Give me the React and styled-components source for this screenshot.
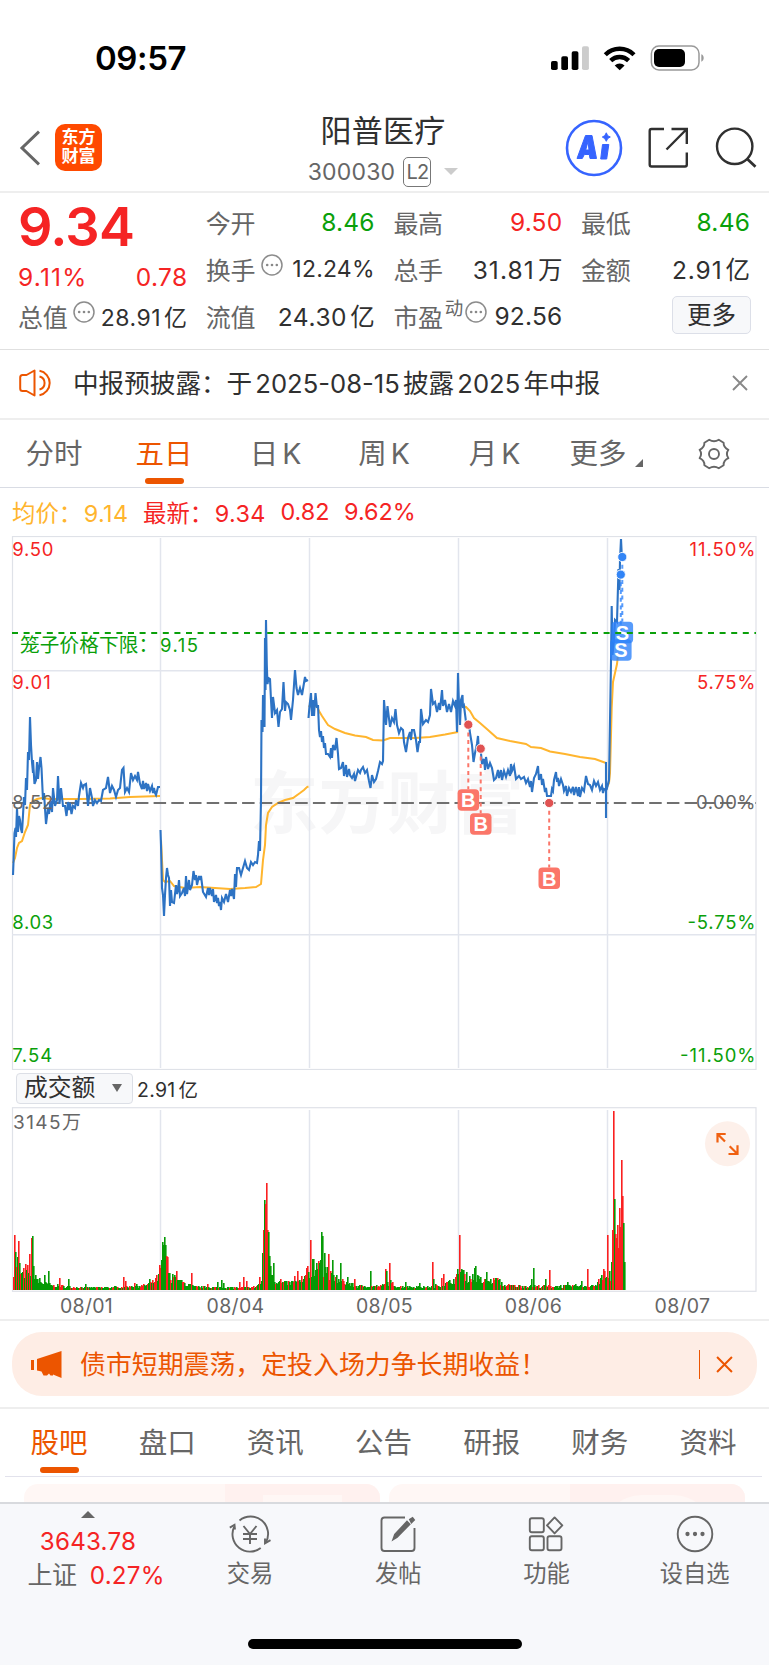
import React from "react";
import styled, { createGlobalStyle } from "styled-components";

const RED = "#f52424";
const GREEN = "#0aa00a";
const ORANGE = "#ec5500";
const DARK = "#303030";
const GREY = "#666";

const GlobalStyle = createGlobalStyle`
  * {
    box-sizing: border-box;
  }
  body {
    margin: 0;
    background: #fff;
    color: ${DARK};
    font-family: Inter, "Noto Sans CJK SC", sans-serif;
  }
  svg {
    display: block;
    flex: none;
  }
`;

const Page = styled.div`
  width: 769px;
  height: 1665px;
  display: flex;
  flex-direction: column;
  overflow: hidden;
  background: #fff;
`;

const StatusBar = styled.div`
  height: 100px;
  padding: 15px 64px 0 95px;
  display: flex;
  align-items: center;
  justify-content: space-between;
`;

const Time = styled.span`
  font-size: 33px;
  font-weight: 580;
  letter-spacing: -0.4px;
  color: #000;
`;

const Header = styled.header`
  height: 93px;
  padding: 4px 12px 0 18px;
  display: flex;
  align-items: center;
  border-bottom: 2px solid #eee;
`;

const HeaderSide = styled.div`
  width: ${p => (p.right ? 244 : 235)}px;
  display: flex;
  align-items: center;
  justify-content: ${p => (p.right ? "flex-end" : "flex-start")};
`;

const AppLogo = styled.div`
  width: 47px;
  height: 47px;
  margin: -1px 0 0 15px;
  padding-top: 4px;
  border-radius: 10px;
  background: #ff4a00;
  color: #fff;
  font-size: 17px;
  font-weight: 700;
  line-height: 19px;
  text-align: center;
`;

const TitleBlock = styled.div`
  flex: 1;
  display: flex;
  flex-direction: column;
  align-items: center;
  padding-top: 2px;
`;

const Title = styled.div`
  font-size: 31px;
  line-height: 40px;
  height: 46px;
  letter-spacing: 0.3px;
`;

const CodeRow = styled.div`
  display: flex;
  align-items: center;
  gap: 8px;
  height: 30px;
  font-size: 23px;
  letter-spacing: 0.2px;
  color: ${GREY};
`;

const LevelBadge = styled.span`
  width: 28px;
  height: 30px;
  margin-right: 5px;
  border: 1px solid #777;
  border-radius: 5px;
  font-size: 20px;
  line-height: 29px;
  letter-spacing: -0.8px;
  text-align: center;
`;

const Caret = styled.span`
  width: 0;
  height: 0;
  border-left: ${p => p.size}px solid transparent;
  border-right: ${p => p.size}px solid transparent;
  border-${p => (p.up ? "bottom" : "top")}: ${p => p.tall || p.size}px solid ${p => p.color};
`;

const Quote = styled.section`
  height: 157px;
  padding: 0 18px;
  display: grid;
  grid-template-columns: repeat(4, 168px);
  column-gap: 19.7px;
  border-bottom: 1.5px solid #e0e0e0;
`;

const QuoteCol = styled.div`
  display: flex;
  flex-direction: column;
  padding-top: 5px;
`;

const QuoteRow = styled.div`
  height: 47px;
  display: flex;
  align-items: center;
  font-size: ${p => p.size || 24.5}px;
  white-space: nowrap;
`;

const Price = styled.div`
  height: 49px;
  padding-top: 2px;
  font-size: 54px;
  font-weight: 600;
  line-height: 54px;
  letter-spacing: -0.8px;
  color: ${RED};
`;

const ChangeRow = styled(QuoteRow)`
  height: 45px;
  margin-right: -1.5px;
  padding-top: 14px;
  letter-spacing: 0.4px;
  color: ${RED};
  justify-content: space-between;
`;

const Percent = styled.span`
  letter-spacing: 1.2px;
`;

const Label = styled.span`
  font-size: 25px;
  letter-spacing: -0.3px;
  color: ${GREY};
`;

const Value = styled.span`
  margin: 0 -1px 0 auto;
  letter-spacing: ${p => p.spacing || 0.2}px;
  color: ${p => p.color || DARK};
`;

const Unit = styled.span`
  margin-left: 3px;
  letter-spacing: 0;
`;

const Sup = styled.span`
  margin: -18px 1px 0 2px;
  font-size: 18.5px;
  color: ${GREY};
`;

const InfoIcon = styled.svg`
  margin: -8px 0 0 ${p => p.$gap || 0}px;
`;

const MoreButton = styled.button`
  width: 79px;
  height: 38px;
  margin: -1px -2px 0 auto;
  padding: 0;
  border: 1.5px solid #dcdfe8;
  border-radius: 5px;
  background: #f7f8fa;
  color: ${DARK};
  font: inherit;
  line-height: 33px;
`;

const Notice = styled.section`
  height: 70px;
  padding: 0 21px 2px 19px;
  display: flex;
  align-items: center;
  font-size: 25.6px;
  border-bottom: 2px solid #eee;
`;

const NoticeText = styled.span`
  flex: 1;
  margin: -4px 0 0 20px;
  word-spacing: -4px;
  white-space: pre;
`;

const Tabs = styled.nav`
  height: 68px;
  display: flex;
  padding-top: ${p => p.top || 0}px;
  margin: ${p => p.gutter || 0};
  border-bottom: 1.5px solid ${p => p.line};
  align-items: flex-start;
`;

const Tab = styled.span`
  width: ${p => p.w}px;
  height: 63px;
  padding-top: 12px;
  display: flex;
  flex-direction: column;
  align-items: center;
  font-size: 28.5px;
  line-height: 42px;
  white-space: nowrap;
  color: ${p => (p.active ? ORANGE : GREY)};
  &::after {
    content: "";
    width: 39px;
    height: 6px;
    margin-top: 3px;
    border-radius: 3px;
    background: ${p => (p.active ? ORANGE : "transparent")};
  }
`;

const TabLabel = styled.span`
  height: 42px;
  display: flex;
  align-items: center;
  gap: ${p => p.gap || 0}px;
`;

const Corner = styled.i`
  width: 0;
  height: 0;
  margin-top: 18px;
  border-left: 8px solid transparent;
  border-bottom: 8px solid ${GREY};
`;

const Legend = styled.div`
  height: 48px;
  padding: 0 12px 1px;
  display: flex;
  align-items: center;
  gap: 14.5px;
  font-size: 23.4px;
  white-space: nowrap;
`;

const LegendItem = styled.span`
  color: ${p => p.color || RED};
  b {
    margin-left: 1.5px;
    font-weight: 400;
    letter-spacing: 0.4px;
  }
`;

const VolumeHead = styled.div`
  height: 37px;
  padding: 0 16px 1px;
  display: flex;
  align-items: center;
  gap: 4px;
  font-size: 19.5px;
  letter-spacing: 0.3px;
`;

const Selector = styled.div`
  width: 117px;
  height: 31px;
  padding: 0 10px 0 7px;
  display: flex;
  align-items: center;
  justify-content: space-between;
  border: 1.5px solid #dcdfe6;
  border-radius: 4px;
  background: #f7f8fa;
  font-size: 23.8px;
  line-height: 28px;
  letter-spacing: 0;
`;

const Dates = styled.div`
  height: 29px;
  padding: 0 12px;
  display: flex;
  border-bottom: 2px solid #eee;
  font-size: 19.5px;
  line-height: 29px;
  letter-spacing: 0.3px;
  color: ${GREY};
  span {
    flex: 1;
    text-align: center;
  }
`;

const BannerWrap = styled.section`
  height: 88px;
  padding: 11px 12px 0;
  border-bottom: 2px solid #eee;
`;

const Banner = styled.div`
  height: 64px;
  padding: 0 24px 0 19px;
  display: flex;
  align-items: center;
  border-radius: 30px;
  background: #feede5;
  color: ${ORANGE};
  font-size: 25.9px;
`;

const BannerText = styled.span`
  flex: 1;
  margin: -4px 0 0 18px;
  white-space: nowrap;
`;

const Divider = styled.i`
  width: 1.5px;
  height: 29px;
  margin-right: 16px;
  background: ${ORANGE};
`;

const Cards = styled.div`
  height: 25px;
  padding: 7px 24px 0;
  display: flex;
  gap: 9px;
  overflow: hidden;
`;

const Card = styled.div`
  flex: 1;
  height: 40px;
  display: flex;
  justify-content: flex-end;
  border-radius: 14px;
  overflow: hidden;
  background: #fff7f5;
`;

const CardArt = styled.div`
  width: ${p => p.w}px;
  padding: 11px ${p => p.side}px 0;
  background: #fff1ef;
  &::before {
    content: "";
    display: block;
    height: 40px;
    border-radius: ${p => p.r};
    background: #fff7f5;
  }
`;

const Footer = styled.footer`
  height: 163px;
  padding-top: 7px;
  display: flex;
  flex-direction: column;
  align-items: center;
  border-top: 2px solid #d8dade;
  background: #f7f8fb;
`;

const FooterRow = styled.div`
  width: 100%;
  height: 128px;
  display: flex;
`;

const IndexCell = styled.div`
  width: 176px;
  display: flex;
  flex-direction: column;
  align-items: center;
  font-size: 24.2px;
  line-height: 33px;
  color: ${RED};
  letter-spacing: 0.2px;
`;

const IndexValue = styled.div`
  margin-top: 7px;
`;

const IndexRow = styled.div`
  display: flex;
  gap: 13px;
  margin-top: 1px;
  padding-left: 16px;
`;

const Action = styled.div`
  width: 148.2px;
  padding-top: 4px;
  display: flex;
  flex-direction: column;
  align-items: center;
  gap: 3px;
  font-size: 23.3px;
  line-height: 36px;
  color: ${GREY};
`;

const HomeBar = styled.div`
  width: 274px;
  height: 10px;
  border-radius: 5px;
  background: #000;
`;

const PRICE = [
  "13,875 13.5,862 14.5,833 15.5,828 16,837 17,808 18,832 19,816 20,820 21,829 22,833 23,815 24,797 25,805 26,778 27,790 28,752 29,760 30,717 31,745 32,762 33,773 33,760 34.5,784 36,780 37,762 38,779 39,768 40.5,757 41.5,768 43,800 44,793 46,824 48,808 49,814 50.5,801 52,812 53,788 55,806 57,800 58,776 59.5,804 61,788 63,806 65,806 66.5,816 68,802 69,810 70,803 71.5,814 73,806 75,808 76,800 78,806 79,796 81,783 83,788 84,785 86,784 88,806 90,788 92,798 93,806 95,800 97,803 99,800 101,801 103,790 106,788 108,777 110,793 112,786 114,790 116,797 118,790 120,788 122,770 123.5,768 125,792 127,788 129,792 131,773 133,780 135,776 137,780 138,772 140,784 142,789 143,781 144,789 146,783 147,791 148,784 150,791 152,786 153,793 154,788 155,793 156,795 158,787 160,787",
  "160.5,830 161,845 162,888 163,895 164,916 165,895 166,878 167,868 168,875 169,878 170,906 171,890 172,902 174,903 176,885 177,894 178,890 179,880 180,896 182,893 184,888 185,896 186,876 187,894 189,880 190,890 192,885 193.5,871 195,880 196,875 197,885 199,876 200,880 201,876 203,892 206,897 208,888 209,895 210,888 212,896 213,889 214,902 216,895 217,903 218,898 219,906 220,902 221,910 222,898 224,902 226,894 228,902 230,890 231,896 232,889 234,899 235,874 236,887 237,868 239,868 241,875 243,868 245,861 247,868 249,870 251,862 253,865 255,862 257,863 258,855 259,841 260,851 261,800 261.5,720 262.5,732 263,695 264.5,727 265,638 265.5,690 266,620 266.8,665 267.5,684 268.5,678 270,679 271,700 272,718 273,697 275,713 277,710 278.5,727 280,712 282,709 283.5,682 285,711 286,702 288,704 290,710 291,720 293,700 295,670 296.5,688 298,695 300,688 302,695 304,683 305,677 306,681 308,680",
  "308.5,718 309.5,706 311,693 312,716 313,700 314,716 315.5,693 317,708 318,705 319,730 320,737 321,731 322,742 323,736 324,748 325,743 326,754 328,754 330,757 331,748 332,758 333,745 335,750 336.5,738 338,754 339,769 341,768 343,762 344,776 346,765 347,777 349,769 350,775 352,778 354,774 355,781 358,770 360,773 361,770 363,767 365,773 367,770 369,781 370.5,788 372,775 374,782 376,779 378,771 380,762 382,764 383,761 384,700 386,725 387.5,706 390,727 392,718 394,722 395.5,709 397,725 399,733 401,728 403,730 404,742 406,752 408,738 410,732 411,740 412,730 414,730 416,740 417.5,752 419,742 420,742 421,709 423,724 426,720 428,722 430,715 431,689 433,704 435,702 437,712 439,703 440,710 442,690 443,706 445,700 447,712 449,704 451,712 453,701 455,706 456,700 457,732 458,673",
  "458,673 459,706 460,725 461,700 462.5,695 463,708 464,706 466,722 469,724 470,733 472,745 473.5,762 475,753 477,744 478,736 479,752 480.5,748 482,764 484,759 485,770 486,757 488,769 490,763 492,768 494,780 496,778 498,770 499,778 501,770 502,780 504,771 506,777 508,770 510,776 511,764 512,771 514,766 516,779 519,776 521,779 524,777 526,783 528,779 530,787 531,781 532,792 534,778 536,774 538,766 539,780 541,774 542,785 543,779 545,792 546,788 547,796 551,796 552,789 553,791 554,780 556,772 557,782 558,778 559,786 561,779 563,785 564,791 566,786 567,796 569,788 571,792 573,787 574,795 576,787 578,796 579,787 580,797 582,788 584,791 586,776 588,784 590,785 592,790 594,781 596,786 598,782 600,790 602,786 603,793 604,789 606,790 606,762 606,818",
  "606.5,790 609,780 610,721 611,662 611.7,606 612.5,655 614,640 615,620 617,622 618.5,569 619.5,590 620,560 621,539 622,560"
];

const AVERAGE = [
  "13,863 15,858 17,848 19,843 22,841 25,832 28,825 30,805 33,801 37,799 42,798 50,799 80,799 110,798.5 130,797 160,796",
  "161,840 163,880 165,882 170,881 174,886 185,888 200,887 215,888 230,889 245,888 256,887 261,884 263,860 265,845 266,825 268,813 272,807 278,803 285,800 293,798 300,793 304,790 307,787 308.5,786.5",
  "308.5,706 312,707 317,706 319,711 322,716 328,725 335,729 345,733 355,735.5 366,737 373,740 383,740.5 390,738 400,738 415,738 430,737 445,734.5 458,732",
  "458.5,704 462,706 466,707 470,711 474,718 480,723 488,730 497,738 510,741 526,744 531,747 541,748 550,751.5 565,754 580,757 595,759 606,763",
  "606.5,788 609,783 610,773 611.7,708 613,682 615,673 617,664 618,655"
];

const GRID_X = [160.5, 309.5, 458.5, 607.5];

// [text, baseline, colour, right aligned, width]
const AXIS = [
  ["9.50", 556, RED, false, 41],
  ["9.01", 689, RED, false, 38.5],
  ["8.52", 809, GREY, false, 41],
  ["8.03", 929, GREEN, false, 41],
  ["7.54", 1062, GREEN, false, 40],
  ["11.50%", 556, RED, true, 66],
  ["5.75%", 689, RED, true, 58.5],
  ["0.00%", 809, GREY, true, 59.5],
  ["-5.75%", 929, GREEN, true, 68],
  ["-11.50%", 1062, GREEN, true, 75.5]
];

const MARKS = [
  { x: 468.3, y: 724.7, box: 789.3 },
  { x: 480.7, y: 748.7, box: 813.3 },
  { x: 549.2, y: 803, box: 867.5 }
];

const SELLS = [
  { x: 620.8, y: 574.6, box: 639.3 },
  { x: 622.3, y: 557, box: 621.8 }
];

// typical turnover height along the time axis
const VOLUME_BASE = [
  [13, 24], [17, 30], [21, 16], [27, 20], [33, 22], [37, 9], [50, 5], [70, 3], [95, 2.5],
  [118, 3], [145, 5], [152, 8], [158, 14], [162, 38], [166, 34], [169, 14], [178, 9],
  [195, 3], [230, 2.5], [255, 3], [261, 9], [263, 50], [269, 34], [273, 10], [285, 7],
  [295, 8], [303, 9], [308, 20], [318, 24], [326, 22], [332, 12], [345, 8], [357, 4],
  [380, 4], [390, 8], [396, 4], [425, 3], [445, 6], [455, 12], [461, 21], [467, 13],
  [476, 13], [482, 9], [497, 10], [503, 5], [525, 4], [560, 4], [596, 5], [602, 13],
  [610, 15], [613, 50], [617, 42], [619, 34], [622, 56], [624, 25], [625, 8]
];

const SPIKES = [
  [14, 55, "r"], [15, 38, "g"], [18, 49, "r"], [25, 26, "r"], [29, 36, "r"], [31, 52, "r"],
  [32, 54, "g"], [33, 24, "g"], [39, 12, "g"], [44, 15, "g"], [48, 19, "g"], [59, 12, "r"],
  [68, 11, "g"], [85, 6, "g"], [123, 13, "r"], [125, 9, "r"], [134, 7, "r"], [149, 11, "g"],
  [160, 22, "r"], [162, 48, "g"], [164, 53, "g"], [165, 45, "g"], [166, 34, "r"], [172, 16, "g"],
  [174, 15, "g"], [176, 19, "r"], [180, 10, "g"], [191, 17, "r"], [207, 6, "r"], [217, 8, "g"],
  [221, 10, "g"], [223, 7, "g"], [239, 8, "r"], [243, 13, "r"], [246, 9, "r"], [259, 13, "r"],
  [263, 60, "r"], [264, 90, "g"], [265, 86, "r"], [266, 107, "r"], [267, 60, "r"], [268, 58, "g"],
  [269, 34, "g"], [273, 27, "g"], [280, 11, "r"], [285, 9, "g"], [294, 14, "r"], [297, 19, "r"],
  [301, 14, "r"], [306, 22, "r"], [307, 24, "r"], [310, 50, "r"], [312, 31, "g"], [313, 31, "g"],
  [316, 27, "g"], [319, 27, "g"], [321, 58, "g"], [322, 54, "g"], [324, 37, "g"], [328, 36, "r"],
  [332, 30, "g"], [336, 15, "g"], [340, 27, "g"], [347, 13, "g"], [354, 11, "r"], [370, 19, "g"],
  [385, 21, "r"], [386, 19, "g"], [389, 27, "r"], [405, 8, "g"], [419, 7, "g"], [432, 28, "r"],
  [433, 11, "g"], [441, 12, "r"], [443, 16, "r"], [457, 21, "g"], [459, 55, "r"], [461, 21, "g"],
  [464, 16, "r"], [474, 22, "g"], [475, 24, "g"], [486, 18, "g"], [495, 12, "g"], [497, 12, "r"],
  [531, 11, "g"], [533, 22, "g"], [545, 11, "g"], [549, 20, "r"], [567, 8, "g"], [581, 9, "g"],
  [587, 21, "r"], [598, 11, "r"], [603, 21, "r"], [604, 19, "r"], [607, 55, "r"], [609, 19, "g"],
  [612, 60, "r"], [613, 179, "r"], [614, 91, "g"], [615, 56, "r"], [616, 52, "r"], [617, 65, "r"],
  [618, 42, "r"], [619, 82, "r"], [620, 63, "r"], [621, 130, "r"], [622, 94, "r"], [623, 67, "g"],
  [624, 28, "g"]
];

const baseAt = x => {
  const i = VOLUME_BASE.findIndex(p => p[0] > x);
  if (i < 1) return 8;
  const [x0, h0] = VOLUME_BASE[i - 1];
  const [x1, h1] = VOLUME_BASE[i];
  return h0 + ((h1 - h0) * (x - x0)) / (x1 - x0);
};

const bars = (() => {
  const out = [];
  let seed = 7;
  const next = () => {
    seed = (seed * 16807) % 2147483647;
    return seed / 2147483647;
  };
  for (let x = 13; x < 625; x++) {
    const spike = SPIKES.find(s => s[0] === x);
    const h = Math.max(1, baseAt(x) * (0.55 + next() * 0.75));
    const up = next() > 0.7;
    out.push(
      spike
        ? { x, h: spike[1], up: spike[2] === "r" }
        : { x, h: Math.round(h), up }
    );
  }
  return out;
})();

const Dots = ({ gap }) => (
  <InfoIcon $gap={gap} width="22" height="22" viewBox="0 0 22 22">
    <circle cx="11" cy="11" r="10" fill="none" stroke="#8c8c8c" strokeWidth="1.5" />
    {[6.2, 11, 15.8].map(x => (
      <circle key={x} cx={x} cy="11" r="1.3" fill="#888" />
    ))}
  </InfoIcon>
);

const Close = ({ size, color }) => (
  <svg width={size} height={size} viewBox="0 0 16 16">
    <path d="M1 1L15 15M15 1L1 15" stroke={color} strokeWidth="1.9" fill="none" />
  </svg>
);

const StatusIcons = () => (
  <svg width="155" height="28" viewBox="550 43 155 28">
    <rect x="551" y="60" width="6.7" height="9" rx="1.8" />
    <rect x="561.3" y="55.3" width="6.7" height="13.7" rx="1.8" />
    <rect x="571.7" y="50.3" width="6.7" height="18.7" rx="1.8" />
    <rect x="582" y="45.3" width="6.9" height="23.7" rx="1.8" fill="#ccc" />
    <path
      d="M605.3 53.7A20.4 20.4 0 0 1 634 53.7M610.7 59.6A12.8 12.8 0 0 1 628.6 59.6"
      fill="none"
      stroke="#000"
      strokeWidth="4.4"
    />
    <path d="M614.7 64.4A7.1 7.1 0 0 1 624.6 64.4L619.7 69.2Z" />
    <rect x="651.4" y="45" width="47.6" height="24" rx="7.5" fill="none" stroke="#999" strokeWidth="1.5" />
    <rect x="654" y="48" width="31" height="18" rx="5" />
    <path d="M701.3 53.3C704.5 54.5 704.5 59.5 701.3 60.7Z" fill="#999" />
  </svg>
);

const HeaderIcons = () => (
  <svg width="192" height="58" viewBox="565 119 192 58" fill="none" stroke="#303030" strokeWidth="2.4">
    <circle cx="594" cy="148" r="27" stroke="#3664ff" strokeWidth="2.6" />
    <g fill="#3664ff" stroke="#3664ff" strokeWidth="1" strokeLinejoin="round">
      <path
        fillRule="evenodd"
        d="M585.5 135.5H592L596.5 158.5H590L589.3 154.5H584.3L582.3 158.5H577ZM588 141.5L585.7 150H589Z"
      />
      <path d="M602.5 144.5H608.8L606.7 159H600.7Z" />
      <path d="M606.3 132.8L607.7 135.7L610.3 137L607.7 138.5L606.3 141.3L604.7 138.5L602.3 137L604.7 135.7Z" />
    </g>
    <path d="M664 129H651.5Q649.7 129 649.7 131V164.5Q649.7 166.5 651.5 166.5H685Q686.8 166.5 686.8 164.5V152.5" />
    <path d="M671.5 129H686.8V144M686.8 129L666.5 149.5" />
    <circle cx="734.7" cy="146.3" r="17.7" />
    <path d="M747 158.7L755.5 166.7" strokeWidth="2.8" />
  </svg>
);

const Mark = ({ x, y, box, letter, color, dot }) => (
  <g>
    <line x1={x} y1={y} x2={x} y2={box} stroke={color} strokeWidth="2" strokeDasharray="4 3.7" />
    <circle cx={x} cy={y} r="4.6" fill={dot} stroke="#fff" strokeWidth="0.9" />
    <rect x={x - 10.7} y={box} width="21.5" height="21.4" rx="4" fill={color} />
    <text
      x={x}
      y={box + 18}
      textAnchor="middle"
      fontFamily="Liberation Sans, sans-serif"
      fontSize="20"
      fontWeight="700"
      fill="#fff"
    >
      {letter}
    </text>
  </g>
);

const PriceChart = () => (
  <svg width="769" height="534" viewBox="0 536 769 534" fontSize="18.5">
    <text
      x="250"
      y="828"
      fontFamily="Noto Sans CJK SC, sans-serif"
      fontSize="68.5"
      fontWeight="700"
      fill="#f6f6f7"
    >
      东方财富
    </text>
    <rect x="12.5" y="536.5" width="743.5" height="533" fill="none" stroke="#dfe2e8" strokeWidth="1.2" />
    {GRID_X.map(x => (
      <line key={x} x1={x} y1="538" x2={x} y2="1068" stroke="#e2e5ed" strokeWidth="1.5" />
    ))}
    <path d="M12 670.7H756M12 934.7H756" stroke="#e2e5ed" strokeWidth="1.6" />
    {AVERAGE.map(points => (
      <polyline key={points} points={points} fill="none" stroke="#ffb52e" strokeWidth="2" />
    ))}
    <line x1="12" y1="803" x2="756" y2="803" stroke="#707070" strokeWidth="2" strokeDasharray="12.5 5.2" />
    {PRICE.map(points => (
      <polyline key={points} points={points} fill="none" stroke="#2d73c4" strokeWidth="2.1" />
    ))}
    {AXIS.map(([text, y, color, right, width]) => (
      <text key={text} x={right ? 755.5 - width : 12.3} y={y} fill={color} textLength={width}>
        {text}
      </text>
    ))}
    {MARKS.map(m => (
      <Mark key={m.x} {...m} letter="B" color="#fb7669" dot="#e05252" />
    ))}
    {SELLS.map(m => (
      <Mark key={m.x} {...m} letter="S" color="rgba(45,130,250,.8)" dot="#3385f5" />
    ))}
    <line x1="12" y1="633" x2="756" y2="633" stroke={GREEN} strokeWidth="2" strokeDasharray="6 5.6" />
    <text x="20" y="652" fontSize="19.6" fill={GREEN} textLength="138">
      笼子价格下限：
    </text>
    <text x="160" y="652" fill={GREEN} textLength="38">
      9.15
    </text>
  </svg>
);

const VolumeChart = () => (
  <svg width="769" height="185" viewBox="0 1107 769 185" fontSize="19">
    <rect x="12.5" y="1107.7" width="743.5" height="183.6" fill="none" stroke="#dfe2e8" strokeWidth="1.2" />
    {GRID_X.map(x => (
      <line key={x} x1={x} y1="1110" x2={x} y2="1290" stroke="#e2e5ed" strokeWidth="1.5" />
    ))}
    <text x="13" y="1129" fill={GREY} textLength="68">
      3145万
    </text>
    {bars.map(b => (
      <rect key={b.x} x={b.x} y={1290 - b.h} width="1.6" height={b.h} fill={b.up ? "#fa2020" : "#059a05"} />
    ))}
    <circle cx="727.5" cy="1143.7" r="22.5" fill="#fdf0ea" />
    <path
      d="M725.7 1134H717.5V1142.5M717.5 1134L725 1141.5M728.5 1154H737.5V1145.3M737.5 1154L729.7 1146.3"
      fill="none"
      stroke="#f06010"
      strokeWidth="2.2"
    />
  </svg>
);

const ICONS = {
  trade: (
    <g>
      <path d="M10.5 5.4A17.5 17.5 0 0 1 36.8 27.6M31.7 33A17.5 17.5 0 0 1 5.2 11.6" />
      <path d="M.8 12.6L5.5 9.8L6 14.5M36 23.5V28.3L41.5 25.2" />
      <path d="M14.5 11L21 19L27.5 11M21 19V29M14 19H28M14 24H28" />
    </g>
  ),
  post: (
    <g>
      <path d="M28 2.5H7.5Q4.5 2.5 4.5 5.5V33Q4.5 36 7.5 36H34.5Q37.5 36 37.5 33V13" />
      <path d="M16.3 24.3L18 19.5L30 6.7L32.5 9.3L20 22Z" fill={GREY} />
      <path d="M33 4.5L35.5 3L37 5L34.5 7.5Z" fill={GREY} />
    </g>
  ),
  grid: (
    <g>
      <rect x="4.8" y="3.3" width="14" height="14" rx="2" />
      <rect x="4.8" y="21.2" width="14" height="14" rx="2" />
      <rect x="22.5" y="21.2" width="14" height="14" rx="2" />
      <path d="M29.6 2.4L37.3 10.4L29.6 18.4L22 10.4Z" strokeLinejoin="round" />
    </g>
  ),
  more: (
    <g>
      <circle cx="21" cy="19" r="17.3" />
      {[13.5, 21, 28.5].map(x => (
        <circle key={x} cx={x} cy="19" r="1.2" fill={GREY} />
      ))}
    </g>
  )
};

const ACTIONS = [
  ["trade", "交易"],
  ["post", "发帖"],
  ["grid", "功能"],
  ["more", "设自选"]
];

const Gear = () => (
  <svg width="32" height="32" viewBox="0 0 32 32" fill="none" stroke={GREY} strokeWidth="1.9">
    <path
      strokeLinejoin="round"
      d="M11.2 1.8Q16 4.8 20.8 1.8L25.6 4.8Q25.4 9.6 30.4 11.8Q27.4 16 30.4 20.2Q25.4 22.4 25.6 27.2L20.8 30.2Q16 27.2 11.2 30.2L6.4 27.2Q6.6 22.4 1.6 20.2Q4.6 16 1.6 11.8Q6.6 9.6 6.4 4.8Z"
    />
    <circle cx="16" cy="16" r="5" />
  </svg>
);

export default function App() {
  return (
    <Page>
      <GlobalStyle />
      <StatusBar>
        <Time>09:57</Time>
        <StatusIcons />
      </StatusBar>

      <Header>
        <HeaderSide>
          <svg width="22" height="36" viewBox="0 0 22 36">
            <path d="M21 1.7L4 18L21 34.3" fill="none" stroke="#666" strokeWidth="3" />
          </svg>
          <AppLogo>
            东方
            <br />
            财富
          </AppLogo>
        </HeaderSide>
        <TitleBlock>
          <Title>阳普医疗</Title>
          <CodeRow>
            300030
            <LevelBadge>L2</LevelBadge>
            <Caret size={7} color="#ccc" />
          </CodeRow>
        </TitleBlock>
        <HeaderSide right>
          <HeaderIcons />
        </HeaderSide>
      </Header>

      <Quote>
        <QuoteCol>
          <Price>9.34</Price>
          <ChangeRow>
            <Percent>9.11%</Percent>
            <span>0.78</span>
          </ChangeRow>
          <QuoteRow size={23}>
            <Label>总值</Label>
            <Dots gap={6} />
            <Value spacing={0.5}>
              28.91<Unit>亿</Unit>
            </Value>
          </QuoteRow>
        </QuoteCol>
        <QuoteCol>
          <QuoteRow>
            <Label>今开</Label>
            <Value color={GREEN}>8.46</Value>
          </QuoteRow>
          <QuoteRow size={23}>
            <Label>换手</Label>
            <Dots gap={6} />
            <Value>12.24%</Value>
          </QuoteRow>
          <QuoteRow>
            <Label>流值</Label>
            <Value spacing={0.6}>
              24.30<Unit>亿</Unit>
            </Value>
          </QuoteRow>
        </QuoteCol>
        <QuoteCol>
          <QuoteRow>
            <Label>最高</Label>
            <Value color={RED}>9.50</Value>
          </QuoteRow>
          <QuoteRow>
            <Label>总手</Label>
            <Value spacing={1.1}>
              31.81<Unit>万</Unit>
            </Value>
          </QuoteRow>
          <QuoteRow>
            <Label>市盈</Label>
            <Sup>动</Sup>
            <Dots gap={1} />
            <Value>92.56</Value>
          </QuoteRow>
        </QuoteCol>
        <QuoteCol>
          <QuoteRow>
            <Label>最低</Label>
            <Value color={GREEN}>8.46</Value>
          </QuoteRow>
          <QuoteRow>
            <Label>金额</Label>
            <Value spacing={0.9}>
              2.91<Unit>亿</Unit>
            </Value>
          </QuoteRow>
          <QuoteRow>
            <MoreButton>更多</MoreButton>
          </QuoteRow>
        </QuoteCol>
      </Quote>

      <Notice>
        <svg width="34" height="28" viewBox="0 0 34 28" fill="none" stroke={ORANGE} strokeWidth="2">
          <path d="M15.5 1.5V26.5L7.5 22H3.5Q1.2 22 1.2 19.5V8.5Q1.2 6 3.5 6H7.5Z" strokeLinejoin="round" />
          <path d="M20.5 7.5A6.7 6.7 0 0 1 20.5 20.5M20.5 1.8A12.4 12.4 0 0 1 20.5 26.2" />
        </svg>
        <NoticeText>中报预披露：于 2025-08-15 披露 2025 年中报</NoticeText>
        <Close size={16} color="#888" />
      </Notice>

      <Tabs top={1} line="#d9dce4">
        <Tab w={108}>分时</Tab>
        <Tab w={112} active>五日</Tab>
        <Tab w={111}>
          <TabLabel gap={4}>日<span>K</span></TabLabel>
        </Tab>
        <Tab w={106}>
          <TabLabel gap={4}>周<span>K</span></TabLabel>
        </Tab>
        <Tab w={115}>
          <TabLabel gap={4}>月<span>K</span></TabLabel>
        </Tab>
        <Tab w={108}>
          <TabLabel gap={8}>更多<Corner /></TabLabel>
        </Tab>
        <Tab w={107}>
          <TabLabel><Gear /></TabLabel>
        </Tab>
      </Tabs>

      <Legend>
        <LegendItem color="#ffb52e">均价：<b>9.14</b></LegendItem>
        <LegendItem>最新：<b>9.34</b></LegendItem>
        <LegendItem>0.82</LegendItem>
        <LegendItem>9.62%</LegendItem>
      </Legend>

      <PriceChart />

      <VolumeHead>
        <Selector>
          成交额
          <Caret size={5} tall={8} color={GREY} />
        </Selector>
        <span>
          2.91<Unit>亿</Unit>
        </span>
      </VolumeHead>
      <VolumeChart />
      <Dates>
        {["08/01", "08/04", "08/05", "08/06", "08/07"].map(d => (
          <span key={d}>{d}</span>
        ))}
      </Dates>

      <BannerWrap>
        <Banner>
          <svg width="31" height="27" viewBox="0 0 31 27" fill={ORANGE}>
            <path d="M0 9H3V19H0ZM6 8L30.5 0V27L22 23.5V24.5H19.5L18 22.5L16 24.5H12.5L10.5 20.5L6 19.5Z" />
          </svg>
          <BannerText>债市短期震荡，定投入场力争长期收益！</BannerText>
          <Divider />
          <Close size={17} color={ORANGE} />
        </Banner>
      </BannerWrap>

      <Tabs top={1} gutter="0 7px 0 5px" line="#e2e2ec">
        {["股吧", "盘口", "资讯", "公告", "研报", "财务", "资料"].map((name, i) => (
          <Tab key={name} w={108.2} active={i === 0}>
            {name}
          </Tab>
        ))}
      </Tabs>

      <Cards>
        <Card>
          <CardArt w={155} side={38} r="0" />
        </Card>
        <Card>
          <CardArt w={175} side={32} r="40px 40px 0 0" />
        </Card>
      </Cards>

      <Footer>
        <FooterRow>
          <IndexCell>
            <Caret size={7} up color={GREY} />
            <IndexValue>3643.78</IndexValue>
            <IndexRow>
              <Label>上证</Label>
              0.27%
            </IndexRow>
          </IndexCell>
          {ACTIONS.map(([icon, name]) => (
            <Action key={icon}>
              <svg width="42" height="38" viewBox="0 0 42 38" fill="none" stroke={GREY} strokeWidth="1.9">
                {ICONS[icon]}
              </svg>
              {name}
            </Action>
          ))}
        </FooterRow>
        <HomeBar />
      </Footer>
    </Page>
  );
}
